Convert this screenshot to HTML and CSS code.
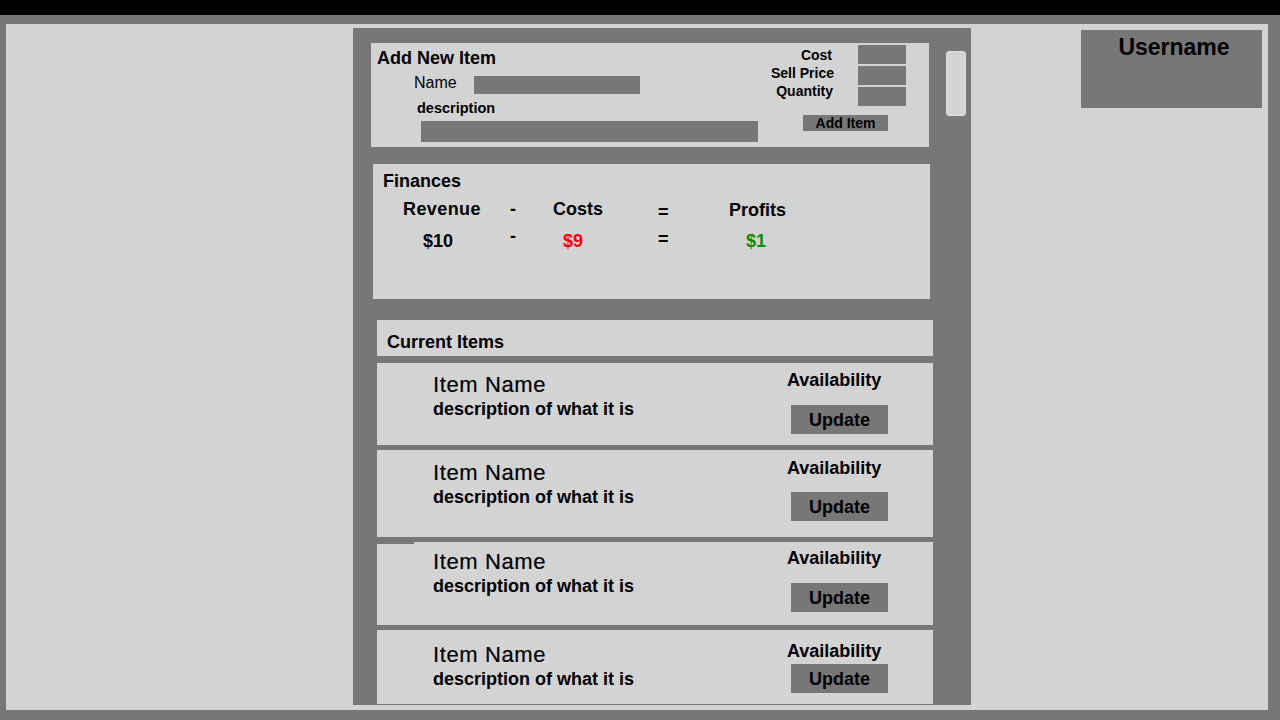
FILE: index.html
```html
<!DOCTYPE html>
<html lang="en">
<head>
<meta charset="utf-8">
<title>Inventory</title>
<link rel="stylesheet" href="styles.css">
</head>
<body>
<div class="topbar"></div>
<div class="frame">
  <div class="canvas">
    <main class="column">
      <div class="scroll-thumb"></div>

      <section class="add-panel">
        <div class="add-left">
          <h2 class="panel-title">Add New Item</h2>
          <div class="name-row">
            <span class="name-label">Name</span>
            <input class="field field-name" type="text" aria-label="Name">
          </div>
          <div class="desc-label">description</div>
          <input class="field field-desc" type="text" aria-label="description">
        </div>
        <div class="add-right">
          <div class="numbers">
            <div class="num-labels">
              <span class="num-label num-label-cost">Cost</span>
              <span class="num-label">Sell Price</span>
              <span class="num-label num-label-qty">Quantity</span>
            </div>
            <div class="num-fields">
              <input class="field field-num" type="text" aria-label="Cost">
              <input class="field field-num" type="text" aria-label="Sell Price">
              <input class="field field-num" type="text" aria-label="Quantity">
            </div>
          </div>
          <button class="add-btn" type="button">Add Item</button>
        </div>
      </section>

      <section class="finances">
        <h2 class="panel-title">Finances</h2>
        <div class="fin-grid">
          <span class="fin-head-rev">Revenue</span>
          <span>-</span>
          <span>Costs</span>
          <span class="fin-eq-head">=</span>
          <span class="fin-profit-head">Profits</span>
          <span class="fin-rev">$10</span>
          <span class="fin-minus-val">-</span>
          <span class="fin-cost">$9</span>
          <span class="fin-eq-val">=</span>
          <span class="fin-profit">$1</span>
        </div>
      </section>

      <section class="items-header">
        <h2 class="panel-title">Current Items</h2>
      </section>

      <article class="item item-1">
        <div class="item-info">
          <div class="item-name">Item Name</div>
          <div class="item-desc">description of what it is</div>
        </div>
        <div class="item-side">
          <div class="item-avail">Availability</div>
          <button class="update-btn" type="button">Update</button>
        </div>
      </article>

      <article class="item item-2">
        <div class="item-info">
          <div class="item-name">Item Name</div>
          <div class="item-desc">description of what it is</div>
        </div>
        <div class="item-side">
          <div class="item-avail">Availability</div>
          <button class="update-btn" type="button">Update</button>
        </div>
      </article>

      <article class="item item-3">
        <div class="item-info">
          <div class="item-name">Item Name</div>
          <div class="item-desc">description of what it is</div>
        </div>
        <div class="item-side">
          <div class="item-avail">Availability</div>
          <button class="update-btn" type="button">Update</button>
        </div>
      </article>

      <article class="item item-4">
        <div class="item-info">
          <div class="item-name">Item Name</div>
          <div class="item-desc">description of what it is</div>
        </div>
        <div class="item-side">
          <div class="item-avail">Availability</div>
          <button class="update-btn" type="button">Update</button>
        </div>
      </article>
    </main>

    <aside class="user">Username</aside>
  </div>
</div>
</body>
</html>
```

FILE: styles.css
```css
* {
  box-sizing: border-box;
}

html, body {
  margin: 0;
  padding: 0;
}

body {
  width: 1280px;
  height: 720px;
  overflow: hidden;
  background: #777777;
  color: #000;
  font-family: "Liberation Sans", Arial, sans-serif;
}

.topbar {
  height: 15px;
  background: #000;
}

.frame {
  height: 705px;
  padding: 9px 12px 10px 6px;
  background: #777777;
}

.canvas {
  display: flex;
  align-items: flex-start;
  height: 686px;
  padding: 4px 0 0 347px;
  background: #d3d3d3;
}

/* main dark column */
.column {
  position: relative;
  display: flex;
  flex-direction: column;
  flex: none;
  width: 618px;
  height: 677px;
  padding-top: 15px;
  overflow: hidden;
  background: #777777;
}

.scroll-thumb {
  position: absolute;
  left: 593px;
  top: 23px;
  width: 20px;
  height: 65px;
  border: 1px solid #dcdcdc;
  border-radius: 3px;
  background: #d3d3d3;
}

.panel-title {
  margin: 0;
  font-size: 18px;
  font-weight: bold;
  line-height: 20px;
}

.field {
  display: block;
  margin: 0;
  padding: 0;
  border: 0;
  outline: none;
  background: #777777;
  font: inherit;
}

/* Add New Item panel */
.add-panel {
  display: flex;
  justify-content: space-between;
  flex: none;
  width: 558px;
  height: 104px;
  margin-left: 18px;
  padding: 0 23px 0 6px;
  background: #d3d3d3;
}

.add-left {
  padding-top: 5px;
}

.name-row {
  display: flex;
  align-items: flex-start;
  margin: 8px 0 0 37px;
}

.name-label {
  width: 60px;
  font-size: 16px;
  line-height: 13px;
}

.field-name {
  width: 166px;
  height: 18px;
}

.desc-label {
  margin: 6px 0 0 40px;
  font-size: 14.5px;
  font-weight: bold;
  line-height: 16px;
}

.field-desc {
  width: 337px;
  height: 21px;
  margin: 5px 0 0 44px;
}

.add-right {
  display: flex;
  flex-direction: column;
  align-items: flex-end;
  padding-top: 2px;
}

.numbers {
  display: flex;
  gap: 24px;
}

.num-labels {
  display: flex;
  flex-direction: column;
  align-items: flex-end;
  padding-top: 1.4px;
  font-size: 14px;
  font-weight: bold;
  line-height: 18px;
}

.num-label-cost {
  margin-right: 2px;
}

.num-label-qty {
  margin-right: 1px;
}

.num-fields {
  display: flex;
  flex-direction: column;
  gap: 2px;
}

.field-num {
  width: 48px;
  height: 19px;
}

.add-btn {
  width: 85px;
  height: 16px;
  margin: 9px 18px 0 0;
  padding: 0;
  border: 0;
  background: #777777;
  color: #000;
  font-family: inherit;
  font-size: 14px;
  font-weight: bold;
  line-height: 16px;
}

/* Finances */
.finances {
  flex: none;
  width: 557px;
  height: 135px;
  margin: 17px 0 0 20px;
  padding: 7px 0 0 10px;
  background: #d3d3d3;
}

.fin-grid {
  display: grid;
  grid-template-columns: 107px 43px 105px 71px auto;
  row-gap: 9px;
  align-items: start;
  margin: 8px 0 0 20px;
  font-size: 18px;
  font-weight: bold;
  line-height: 20px;
}

.fin-head-rev {
  letter-spacing: 0.4px;
}

.fin-eq-head {
  margin-top: 2.5px;
}

.fin-profit-head {
  margin-top: 1px;
}

.fin-rev {
  padding-left: 20px;
}

.fin-minus-val {
  margin-top: -4.5px;
}

.fin-cost {
  padding-left: 10px;
  color: #ff0000;
}

.fin-eq-val {
  margin-top: -2px;
}

.fin-profit {
  padding-left: 17px;
  color: #0b8c0b;
}

/* Current items */
.items-header {
  flex: none;
  width: 556px;
  height: 36px;
  margin: 21px 0 0 24px;
  padding: 12px 0 0 10px;
  background: #d3d3d3;
}

.item {
  position: relative;
  display: flex;
  justify-content: space-between;
  flex: none;
  width: 556px;
  margin: 5px 0 0 24px;
  padding: 0 45px 0 56px;
  background: #d3d3d3;
}

.item-info {
  padding-top: var(--name-pad);
}

.item-name {
  font-size: 22px;
  line-height: 24px;
  letter-spacing: 0.6px;
  -webkit-text-stroke: 0.2px #000;
}

.item-desc {
  font-size: 18px;
  font-weight: bold;
  line-height: 25px;
}

.item-side {
  width: 101px;
  padding-top: var(--side-pad);
}

.item-avail {
  font-size: 18px;
  font-weight: bold;
  line-height: 20px;
}

.update-btn {
  display: block;
  width: 97px;
  height: 29px;
  margin: var(--btn-gap) 0 0 4px;
  padding: 2px 0 0;
  border: 0;
  background: #777777;
  color: #000;
  font-family: inherit;
  font-size: 18px;
  font-weight: bold;
  line-height: 27px;
}

.item-1 {
  margin-top: 7px;
  height: 82px;
  --name-pad: 9.5px;
  --side-pad: 7px;
  --btn-gap: 15px;
}

.item-2 {
  height: 87px;
  --name-pad: 11px;
  --side-pad: 8px;
  --btn-gap: 14px;
}

.item-3 {
  height: 83px;
  --name-pad: 8px;
  --side-pad: 6px;
  --btn-gap: 15px;
}

.item-3::before {
  content: "";
  position: absolute;
  left: 0;
  top: 0;
  width: 37px;
  height: 1.5px;
  background: #777777;
}

.item-4 {
  height: 74px;
  --name-pad: 12.5px;
  --side-pad: 11px;
  --btn-gap: 3px;
}

/* Username box */
.user {
  flex: none;
  width: 181px;
  height: 78px;
  margin: 2px 0 0 110px;
  padding: 3.7px 0 0 5px;
  background: #777777;
  font-size: 23px;
  font-weight: bold;
  line-height: 26px;
  text-align: center;
}
```
